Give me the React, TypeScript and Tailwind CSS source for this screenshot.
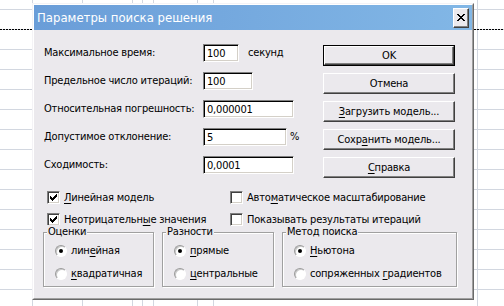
import React from "react";

const FONT = "font-['DejaVu_Sans_Condensed','DejaVu_Sans',sans-serif]";

function U({ children }: { children: React.ReactNode }) {
  return <span className="underline underline-offset-[2px]">{children}</span>;
}

function Field({ w, value }: { w: string; value: string }) {
  return (
    <div
      className={`h-[18px] ${w} bg-white border border-t-[#808080] border-l-[#808080] border-r-white border-b-white shadow-[inset_1px_1px_0_#000,inset_-1px_-1px_0_#d4d0c8] flex items-center pl-[3px] text-[11px] leading-none text-black`}
    >
      {value}
    </div>
  );
}

function Btn({ children, def }: { children: React.ReactNode; def?: boolean }) {
  const inner =
    "h-full w-full flex items-center justify-center border border-t-white border-l-white border-r-[#404040] border-b-[#404040] shadow-[inset_-1px_-1px_0_#808080] bg-[#ebe9ed] text-[11px] leading-none";
  return def ? (
    <div className="h-[21px] w-[132px] border border-black">
      <div className={inner}>{children}</div>
    </div>
  ) : (
    <div className="h-[21px] w-[132px]">
      <div className={inner}>{children}</div>
    </div>
  );
}

function CheckMark() {
  return (
    <svg width="7" height="7" viewBox="0 0 7 7" shapeRendering="crispEdges">
      <rect x="0" y="2" width="1" height="3" fill="#000" />
      <rect x="1" y="3" width="1" height="3" fill="#000" />
      <rect x="2" y="4" width="1" height="3" fill="#000" />
      <rect x="3" y="3" width="1" height="3" fill="#000" />
      <rect x="4" y="2" width="1" height="3" fill="#000" />
      <rect x="5" y="1" width="1" height="3" fill="#000" />
      <rect x="6" y="0" width="1" height="3" fill="#000" />
    </svg>
  );
}

function Check({ checked, children }: { checked?: boolean; children: React.ReactNode }) {
  return (
    <div className="flex items-center h-[13px] gap-[4px] text-[11px] leading-none">
      <div className="w-[13px] h-[13px] shrink-0 bg-white border border-t-[#808080] border-l-[#808080] border-r-white border-b-white shadow-[inset_1px_1px_0_#404040,inset_-1px_-1px_0_#d4d0c8] flex items-center justify-center">
        {checked && <CheckMark />}
      </div>
      <span>{children}</span>
    </div>
  );
}

function Radio({ on, children }: { on?: boolean; children: React.ReactNode }) {
  return (
    <div className="flex items-center h-[13px] gap-[4px] text-[11px] leading-none">
      <div className="w-[12px] h-[12px] shrink-0 rounded-full bg-white border border-t-[#9a9a9a] border-l-[#9a9a9a] border-r-white border-b-white shadow-[inset_1px_1px_0_#c8c8c8] flex items-center justify-center">
        {on && <div className="w-[4px] h-[4px] rounded-full bg-black" />}
      </div>
      <span>{children}</span>
    </div>
  );
}

function Group({ title, w, children }: { title: string; w: string; children: React.ReactNode }) {
  return (
    <div className={`relative ${w} h-[55px] border border-[#a0a0a0] shadow-[1px_1px_0_#fff,inset_1px_1px_0_#fff]`}>
      <span className="absolute left-[3px] -top-[8px] bg-[#ebe9ed] px-[1px] text-[11px] leading-[14px]">
        {title}
      </span>
      <div className="flex flex-col pl-[11px] pt-[11px] gap-[10px]">{children}</div>
    </div>
  );
}

function Grid() {
  const hs = Array.from({ length: 15 }, (_, i) => 9.5 + i * 20);
  const vs = [32.5, 82.5, 132.5, 142.5, 153.5, 197.5, 213.5, 477.5];
  return (
    <svg className="absolute inset-0" width="504" height="306" viewBox="0 0 504 306" shapeRendering="crispEdges">
      {hs.map((y) => (
        <line key={y} x1="0" y1={y} x2="504" y2={y} stroke="#d2d7e0" strokeWidth="1" />
      ))}
      {vs.map((x) => (
        <line key={x} x1={x} y1="0" x2={x} y2="306" stroke="#d2d7e0" strokeWidth="1" />
      ))}
      <line x1="0" y1="29.5" x2="504" y2="29.5" stroke="#000" strokeWidth="1" strokeDasharray="2 1" />
    </svg>
  );
}

export default function App() {
  return (
    <div className={`relative w-[504px] h-[306px] bg-white overflow-hidden text-black tracking-[-0.2px] ${FONT}`}>
      <Grid />
      <div className="absolute left-[32px] top-[3px] w-[442px] border border-t-[#f4f3f6] border-l-[#f4f3f6] border-r-[#6a6a6a] border-b-[#6a6a6a]">
        <div className="border border-t-white border-l-white border-r-[#a0a0a0] border-b-[#a0a0a0]">
          {/* title bar */}
          <div className="h-[25px] flex items-center justify-between pl-[3px] pr-[3px] bg-linear-to-r from-[#6a9dd8] to-[#82b7e6]">
            <span className="text-white text-[13px] leading-none tracking-normal">Параметры поиска решения</span>
            <div className="w-[16px] h-[20px] flex items-center justify-center bg-[#ebe9ed] border border-t-white border-l-white border-r-[#404040] border-b-[#404040] shadow-[inset_-1px_-1px_0_#808080]">
              <svg width="8" height="7" viewBox="0 0 8 7" shapeRendering="crispEdges">
                <path d="M0 0h2v1h-2zM6 0h2v1h-2zM1 1h2v1h-2zM5 1h2v1h-2zM2 2h4v1h-4zM3 3h2v1h-2zM2 4h4v1h-4zM1 5h2v1h-2zM5 5h2v1h-2zM0 6h2v1h-2zM6 6h2v1h-2z" fill="#000" />
              </svg>
            </div>
          </div>
          {/* body */}
          <div className="bg-[#ebe9ed] h-[268px] text-[11px]">
            <div className="flex pt-[14px]">
              <div className="w-[279px] pl-[10px] flex flex-col gap-[10px]">
                <div className="flex items-center h-[18px]">
                  <span className="w-[159px]">Максимальное время:</span>
                  <Field w="w-[36px]" value="100" />
                  <span className="ml-[9px]">секунд</span>
                </div>
                <div className="flex items-center h-[18px]">
                  <span className="w-[159px]">Предельное число итераций:</span>
                  <Field w="w-[50px]" value="100" />
                </div>
                <div className="flex items-center h-[18px]">
                  <span className="w-[159px]">Относительная погрешность:</span>
                  <Field w="w-[91px]" value="0,000001" />
                </div>
                <div className="flex items-center h-[18px]">
                  <span className="w-[159px]">Допустимое отклонение:</span>
                  <Field w="w-[84px]" value="5" />
                  <span className="ml-[3px]">%</span>
                </div>
                <div className="flex items-center h-[18px]">
                  <span className="w-[159px]">Сходимость:</span>
                  <Field w="w-[91px]" value="0,0001" />
                </div>
              </div>
              <div className="mt-[1px] ml-[10px] flex flex-col gap-[7px]">
                <Btn def>OK</Btn>
                <Btn>Отмена</Btn>
                <Btn>
                  <U>З</U>агрузить модель...
                </Btn>
                <Btn>
                  Сохр<U>а</U>нить модель...
                </Btn>
                <Btn>
                  <U>С</U>правка
                </Btn>
              </div>
            </div>
            <div className="mt-[13px] grid grid-cols-[183px_1fr] gap-y-[9px] pl-[13px]">
              <Check checked>
                <U>Л</U>инейная модель
              </Check>
              <Check>
                Авто<U>м</U>атическое масштабирование
              </Check>
              <Check checked>
                Неотрицательн<U>ы</U>е значения
              </Check>
              <Check>
                Показывать <U>р</U>езультаты итераций
              </Check>
            </div>
            <div className="mt-[6px] pl-[9px] flex gap-[8px]">
              <Group title="Оценки" w="w-[111px]">
                <Radio on>
                  лин<U>е</U>йная
                </Radio>
                <Radio>
                  <U>к</U>вадратичная
                </Radio>
              </Group>
              <Group title="Разности" w="w-[112px]">
                <Radio on>
                  <U>п</U>рямые
                </Radio>
                <Radio>
                  <U>ц</U>ентральные
                </Radio>
              </Group>
              <Group title="Метод поиска" w="w-[175px]">
                <Radio on>
                  <U>Н</U>ьютона
                </Radio>
                <Radio>
                  сопряженных <U>г</U>радиентов
                </Radio>
              </Group>
            </div>
          </div>
        </div>
      </div>
    </div>
  );
}
